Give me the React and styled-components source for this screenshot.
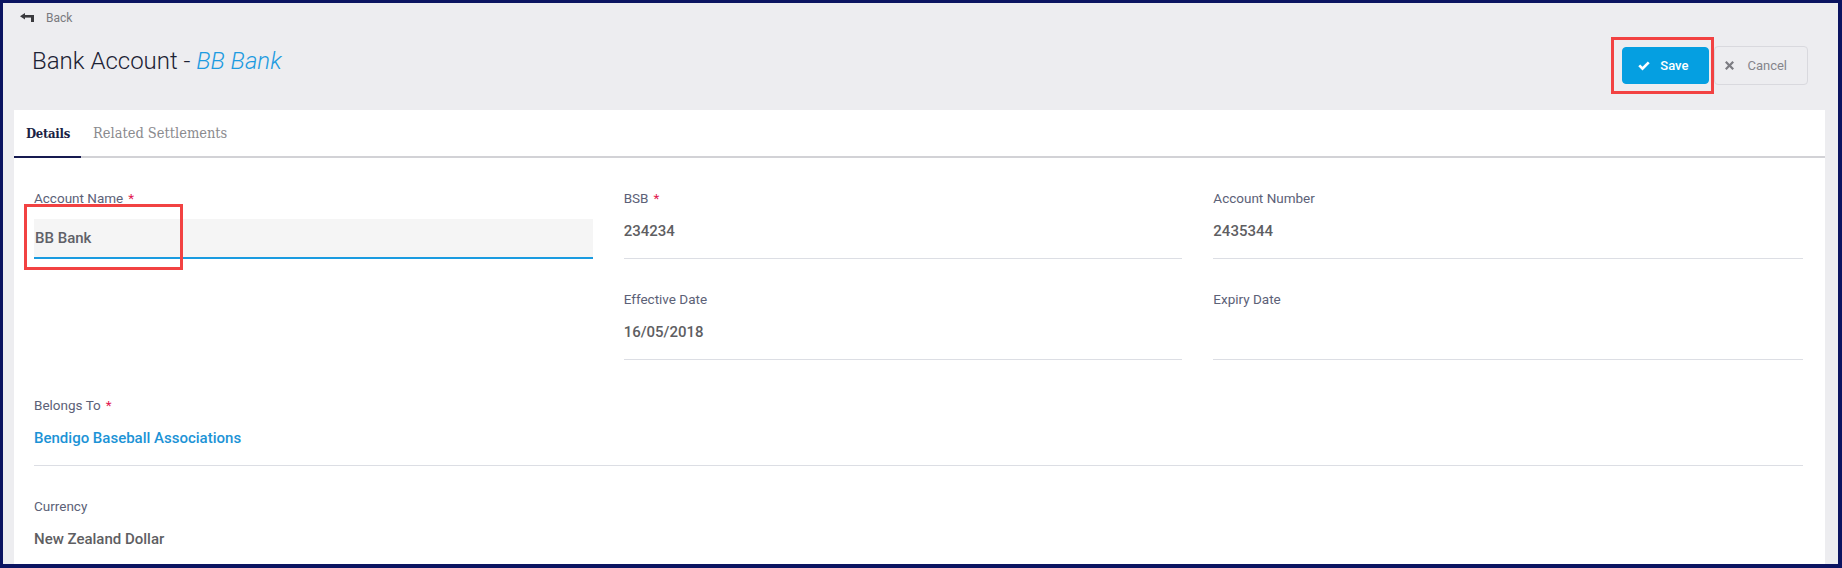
import React from "react"
import styled, { createGlobalStyle } from "styled-components"

const GlobalStyle = createGlobalStyle`
  html, body {
    margin: 0;
    padding: 0;
  }
  body {
    font-family: Roboto, "Liberation Sans", sans-serif;
    background: #ededf0;
  }
`

const Frame = styled.div`
  position: relative;
  box-sizing: border-box;
  height: 568px;
  overflow: hidden;
  border-style: solid;
  border-color: #0b1461;
  border-width: 3px 4px 4px 3px;
  background: #ededf0;
  padding: 0 13px 0 11px;
`

const BackRow = styled.a`
  display: flex;
  align-items: center;
  gap: 12px;
  height: 29px;
  padding-left: 6px;
  color: #7a7a7e;
  font-size: 12px;
  text-decoration: none;
`

const HeaderRow = styled.div`
  display: flex;
  justify-content: space-between;
  align-items: flex-start;
  height: 78px;
  padding-top: 14px;
  box-sizing: border-box;
`

const Title = styled.h1`
  margin: 0 0 0 18px;
  font-size: 24px;
  line-height: 30px;
  font-weight: 300;
  color: #1c2234;
`

const TitleName = styled.em`
  color: #1d9be0;
  font-weight: 300;
`

const Actions = styled.div`
  display: flex;
  align-items: center;
  gap: 5px;
  margin-right: 17px;
  height: 39px;
`

const Button = styled.button`
  display: flex;
  align-items: center;
  gap: ${(p) => (p.$primary ? "10px" : "13px")};
  box-sizing: border-box;
  height: ${(p) => (p.$primary ? "37px" : "39px")};
  padding: ${(p) => (p.$primary ? "0 20px 0 15px" : "0 20px 0 10px")};
  border-radius: 4px;
  border: 1px solid ${(p) => (p.$primary ? "#059fe1" : "#d9d9de")};
  background: ${(p) => (p.$primary ? "#059fe1" : "#ededf0")};
  color: ${(p) => (p.$primary ? "#ffffff" : "#85858b")};
  font-family: Roboto, sans-serif;
  font-size: 13px;
  font-weight: ${(p) => (p.$primary ? 500 : 400)};
  cursor: pointer;
`

const Card = styled.div`
  background: #ffffff;
`

const TabBar = styled.div`
  display: flex;
  height: 46px;
  border-bottom: 2px solid #d2d2d6;
`

const Tab = styled.div`
  display: flex;
  align-items: center;
  padding: 0 11px 0 12px;
  margin-bottom: -2px;
  border-bottom: 2px solid ${(p) => (p.$active ? "#161a50" : "transparent")};
  font-family: "DejaVu Serif Condensed", "DejaVu Serif", serif;
  font-stretch: condensed;
  font-size: ${(p) => (p.$active ? "13px" : "14.5px")};
  letter-spacing: ${(p) => (p.$active ? "-0.3px" : "0")};
  font-weight: ${(p) => (p.$active ? 700 : 400)};
  color: ${(p) => (p.$active ? "#1b1f45" : "#8a8a8e")};
`

const Form = styled.div`
  padding: 30px 22px 0 20px;
`

const Grid = styled.div`
  display: grid;
  grid-template-columns: repeat(3, 1fr);
  row-gap: 30px;
`

const Field = styled.div`
  padding-right: ${(p) => (p.$last ? "0" : "31px")};
  margin-top: ${(p) => p.$gap || "0"};
`

const Label = styled.div`
  font-size: 13.5px;
  line-height: 20px;
  color: #5c6177;
`

const Req = styled.span`
  color: #e2174f;
  margin-left: 5px;
`

const Value = styled.div`
  margin-top: 13px;
  min-height: 20px;
  padding-bottom: 17px;
  border-bottom: 1px solid #dcdee4;
  font-size: 15px;
  line-height: 20px;
  font-weight: 500;
  color: ${(p) => (p.$link ? "#1c93d6" : "#5e5e62")};
`

const InputBox = styled.div`
  margin-top: 11px;
  height: 38px;
  padding-left: 1px;
  background: #f5f5f5;
  border-bottom: 2px solid #1a9be0;
  font-size: 15px;
  line-height: 38px;
  font-weight: 500;
  color: #606168;
`

const Highlight = styled.div`
  position: absolute;
  box-sizing: border-box;
  border: 3px solid #f24242;
  pointer-events: none;
`

const BackIcon = () => (
  <svg width="14" height="9" viewBox="0 0 14 9" fill="#3a3a3e">
    <path d="M0 3.2 L5 0 L5 6.4 Z" />
    <rect x="4" y="2" width="10" height="2.6" />
    <rect x="11" y="2" width="3" height="7" />
  </svg>
)

const CheckIcon = () => (
  <svg width="12" height="10" viewBox="0 0 12 10" fill="#ffffff">
    <path d="M0.3 5.3 L2.2 3.4 L4.5 5.7 L9.8 0.4 L11.7 2.3 L4.5 9.5 Z" />
  </svg>
)

const CloseIcon = () => (
  <svg width="9" height="9" viewBox="0 0 9 9" fill="#7c7c82">
    <path d="M1.6 0 L4.5 2.9 L7.4 0 L9 1.6 L6.1 4.5 L9 7.4 L7.4 9 L4.5 6.1 L1.6 9 L0 7.4 L2.9 4.5 L0 1.6 Z" />
  </svg>
)

const ReadField = ({ label, value, required, last, link }) => (
  <Field $last={last}>
    <Label>
      {label}
      {required && <Req>*</Req>}
    </Label>
    <Value $link={link}>{value}</Value>
  </Field>
)

const App = () => (
  <>
    <GlobalStyle />
    <Frame>
      <BackRow href="#">
        <BackIcon />
        Back
      </BackRow>
      <HeaderRow>
        <Title>
          Bank Account - <TitleName>BB Bank</TitleName>
        </Title>
        <Actions>
          <Button $primary>
            <CheckIcon />
            Save
          </Button>
          <Button>
            <CloseIcon />
            Cancel
          </Button>
        </Actions>
      </HeaderRow>
      <Card>
        <TabBar>
          <Tab $active>Details</Tab>
          <Tab>Related Settlements</Tab>
        </TabBar>
        <Form>
          <Grid>
            <Field>
              <Label>
                Account Name<Req>*</Req>
              </Label>
              <InputBox>BB Bank</InputBox>
            </Field>
            <ReadField label="BSB" value="234234" required />
            <ReadField label="Account Number" value="2435344" last />
            <div />
            <ReadField label="Effective Date" value="16/05/2018" />
            <ReadField label="Expiry Date" value="" last />
          </Grid>
          <Field $last $gap="35px">
            <Label>
              Belongs To<Req>*</Req>
            </Label>
            <Value $link>Bendigo Baseball Associations</Value>
          </Field>
          <Field $last $gap="30px">
            <Label>Currency</Label>
            <Value>New Zealand Dollar</Value>
          </Field>
        </Form>
      </Card>
      <Highlight style={{ left: 1608, top: 34, width: 103, height: 57 }} />
      <Highlight style={{ left: 21, top: 201, width: 159, height: 66 }} />
    </Frame>
  </>
)

export default App
